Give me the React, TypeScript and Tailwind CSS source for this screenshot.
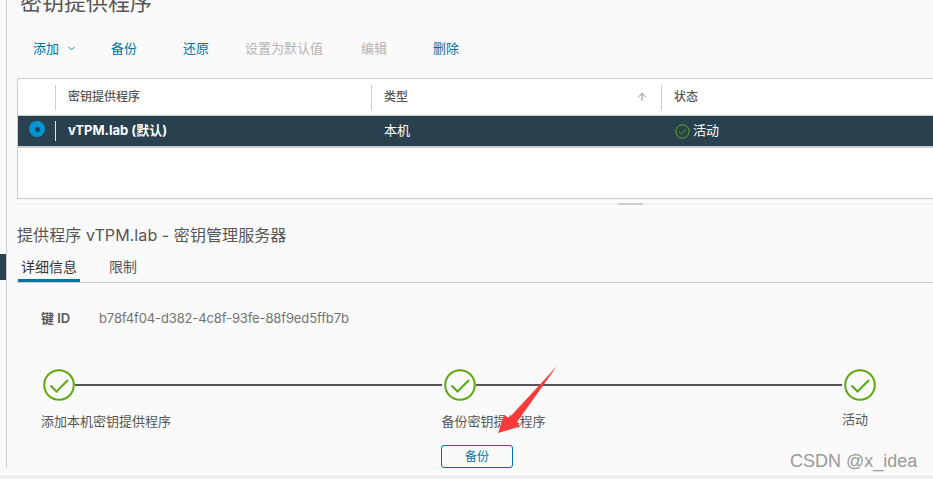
import { ChevronDown, ArrowUp } from 'lucide-react'

const actions = [
  { label: '备份', className: 'ml-[34px] text-[#0072a3]' },
  { label: '还原', className: 'ml-[46px] text-[#0072a3]' },
  { label: '设置为默认值', className: 'ml-[36px] text-[#b3b3b3]' },
  { label: '编辑', className: 'ml-[38px] text-[#b3b3b3]' },
  { label: '删除', className: 'ml-[46px] text-[#0072a3]' },
]

const steps = [
  { label: '添加本机密钥提供程序', line: true, labelClass: 'mt-[11px]' },
  { label: '备份密钥提供程序', line: true, labelClass: 'mt-[11px]' },
  { label: '活动', line: false, labelClass: 'mt-[9px]' },
]

function StepCheck() {
  return (
    <svg width="32" height="32" viewBox="0 0 32 32" className="shrink-0">
      <circle cx="16" cy="16" r="14.8" fill="none" stroke="#5fa812" strokeWidth="2" />
      <path d="M7.5 16.5 L13.5 22.5 L25 11" fill="none" stroke="#5fa812" strokeWidth="2" />
    </svg>
  )
}

export default function App() {
  return (
    <div className="relative flex h-[479px] w-[933px] overflow-hidden bg-[#fafafa] font-['Inter','Noto_Sans_CJK_SC',sans-serif] text-[#565656]">
      {/* left rail */}
      <div className="flex h-[468px] w-[7px] shrink-0 flex-col border-r border-[#cccccc] pt-[254px]">
        <div className="h-[26px] w-[6px] bg-[#29414e]" />
      </div>

      <div className="min-w-0 flex-1 pl-[10px]">
        <h1 className="ml-[3px] mt-[-11px] h-[26px] text-[22px] leading-[26px] text-[#565656]">密钥提供程序</h1>

        <div className="mt-[23px] flex h-[20px] items-center pl-[16px] text-[13px] leading-[20px]">
          <span className="text-[#0072a3]">添加</span>
          <ChevronDown className="ml-[7px] h-[11px] w-[11px] text-[#0072a3]" strokeWidth={2} />
          {actions.map((action) => (
            <span key={action.label} className={action.className}>
              {action.label}
            </span>
          ))}
        </div>

        {/* table */}
        <div className="mt-[20px] h-[121px] rounded-tl-[3px] border-t border-b border-l border-[#cccccc] bg-white">
          <div className="flex h-[36px] items-center text-[12px] font-medium text-[#565656]">
            <div className="h-[25px] w-[38px] border-r border-[#cccccc]" />
            <div className="flex h-[25px] w-[316px] items-center border-r border-[#cccccc] pb-[1px] pl-[12px]">密钥提供程序</div>
            <div className="flex h-[25px] w-[290px] items-center justify-between border-r border-[#cccccc] pb-[1px] pl-[12px] pr-[13px]">
              <span>类型</span>
              <ArrowUp className="h-[12px] w-[12px] text-[#8c8c8c]" strokeWidth={2} />
            </div>
            <div className="pb-[1px] pl-[12px]">状态</div>
          </div>
          <div className="flex h-[33px] items-center border-t border-b-2 border-t-[#cccccc] border-b-[#cccccc] bg-[#29414e] text-[13px] text-white">
            <div className="flex h-[20px] w-[38px] items-center border-r border-[#dfe5e8] pb-[4px] pl-[11px]">
              <span className="flex h-[16px] w-[16px] items-center justify-center rounded-full bg-[#0095d3]">
                <span className="h-[5px] w-[5px] rounded-full bg-[#29414e]" />
              </span>
            </div>
            <div className="w-[316px] pl-[12px] font-bold">vTPM.lab (默认)</div>
            <div className="w-[290px] pl-[12px]">本机</div>
            <div className="flex items-center pl-[13px]">
              <svg width="15" height="15" viewBox="0 0 15 15" className="mr-[3px]">
                <circle cx="7.5" cy="7.5" r="6.7" fill="none" stroke="#62a420" strokeWidth="1" />
                <path d="M3.8 7.6 L6.5 10.2 L11.3 5" fill="none" stroke="#62a420" strokeWidth="1" />
              </svg>
              活动
            </div>
          </div>
        </div>

        {/* splitter */}
        <div className="mt-[4px] flex h-[2px] justify-center bg-[#f1f1f1] pl-[310px]">
          <div className="h-[2px] w-[25px] bg-[#cccccc]" />
        </div>

        <h2 className="mt-[20px] h-[20px] text-[16px] leading-[20px] tracking-[0.08px] text-[#565656]">提供程序 vTPM.lab - 密钥管理服务器</h2>

        {/* tabs */}
        <div className="mt-[9px] flex h-[29px] items-start border-b border-[#cccccc] text-[14px]">
          <div className="ml-px h-[28px] w-[62px] border-b-[3px] border-[#0072a3] pl-[3px] pt-[4px] leading-[18px] text-[#333333]">详细信息</div>
          <div className="ml-[29px] pt-[4px] leading-[18px]">限制</div>
        </div>

        <div className="mt-[26px] flex h-[18px] items-center pl-[24px] text-[13px] leading-[18px]">
          <span className="w-[58px] font-semibold">键 ID</span>
          <span className="tracking-[-0.12px] text-[#727272]">b78f4f04-d382-4c8f-93fe-88f9ed5ffb7b</span>
        </div>

        {/* stepper */}
        <div className="mt-[42px] flex pl-[24px] text-[13px] leading-[18px]">
          {steps.map((step) => (
            <div key={step.label} className="w-[400.5px] shrink-0">
              <div className="flex items-center pl-[2px]">
                <StepCheck />
                {step.line && <div className="h-[2px] flex-1 bg-[#565656]" />}
              </div>
              <div className={`whitespace-nowrap ${step.labelClass}`}>{step.label}</div>
              {step.label === '备份密钥提供程序' && (
                <button className="ml-[-0.5px] mt-[15px] flex h-[23px] w-[72px] items-center justify-center rounded-[3px] border border-[#0072a3] text-[12px] text-[#0072a3]">
                  备份
                </button>
              )}
            </div>
          ))}
        </div>
      </div>

      {/* bottom strip of the window */}
      <div className="absolute bottom-0 left-0 h-[4px] w-full bg-[#eeeeee]" />

      {/* annotation arrow */}
      <svg width="70" height="80" viewBox="0 0 70 80" className="absolute left-[490px] top-[362px]">
        <polygon points="67,4 27,60 30,64.5 8,71 14,53 19,56" fill="#fb3b3b" />
      </svg>

      <div className="absolute left-[790px] top-[449px] text-[18px] leading-[24px] text-[#999999] font-['Liberation_Sans',sans-serif]">CSDN @x_idea</div>
    </div>
  )
}
